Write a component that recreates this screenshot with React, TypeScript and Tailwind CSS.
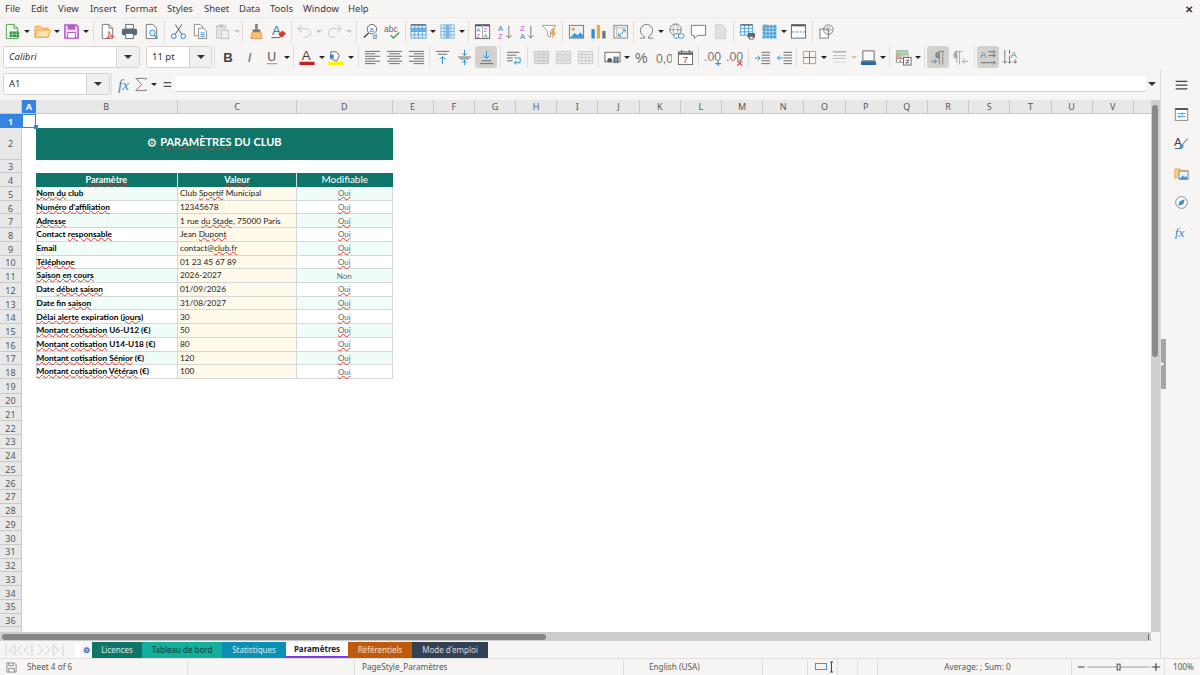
import React from 'react';

const UI = "font-['Noto_Sans',sans-serif]";
const CELL = "font-['Lato','Noto_Sans',sans-serif]";

// builds the path of a small table icon
function grid(x: number, y: number, w: number, h: number, cols: number, rows: number) {
  let d = `M${x} ${y}h${w}v${h}h${-w}z`;
  for (let i = 1; i < cols; i++) d += `M${x + (w * i) / cols} ${y}v${h}`;
  for (let i = 1; i < rows; i++) d += `M${x} ${y + (h * i) / rows}h${w}`;
  return d;
}

const lines = (ws: number[][], y0: number, step: number, c = '#666') => (
  <path d={ws.map(([x, w], i) => `M${x} ${y0 + i * step + 0.5}h${w}`).join('')} stroke={c} fill="none" />
);

const T = ({ x, y, s, c, w, i, children }: { x: number; y: number; s: number; c: string; w?: number; i?: boolean; children: React.ReactNode }) => (
  <text x={x} y={y} fontSize={s} fill={c} fontWeight={w} fontStyle={i ? 'italic' : undefined} fontFamily="Liberation Sans, sans-serif">{children}</text>
);

const icons: Record<string, React.ReactNode> = {
  new: <><path d="M2.5 1.5h8l4 4v11h-12z" fill="#eef8ee" stroke="#4aa350" /><path d="M10.5 1.5v4h4" fill="none" stroke="#4aa350" /><rect x="6" y="9" width="10" height="6" fill="#3b9448" /><path d="M9 9v6M13 9v6M6 12h10" stroke="#bfe3c2" strokeWidth=".6" /></>,
  open: <><path d="M1 15V3.5h6l1.5 2H15V15z" fill="#fbcf8a" stroke="#e9a23b" /><path d="M1 15l2.5-7.5H17.5L15 15z" fill="#fde2b2" stroke="#e9a23b" /></>,
  save: <><path d="M2 2h12l2 2v12H2z" fill="#f4dcf8" stroke="#b35ac6" strokeWidth="1.6" /><rect x="5" y="2" width="8" height="5" fill="#b35ac6" /><rect x="5" y="10" width="8" height="6" fill="#fff" stroke="#b35ac6" /></>,
  pdf: <><path d="M3.5 1.5h7l4 4v11h-11z" fill="#fff" stroke="#777" /><path d="M10.5 1.5v4h4" fill="none" stroke="#777" /><path d="M8 16.5c2.5-2 3-5 2.5-7.5 1 3.5 2.5 5 5.5 5.5-3-.5-6 .5-8 2z" fill="none" stroke="#d9383a" /></>,
  print: <><rect x="5" y="1.5" width="8" height="5" fill="#fff" stroke="#666" /><rect x="1" y="6" width="16" height="7" rx="1.5" fill="#5a6a76" /><rect x="5" y="11" width="8" height="5.5" fill="#fff" stroke="#666" /></>,
  preview: <><path d="M3.5 1.5h7l4 4v11h-11z" fill="#fff" stroke="#777" /><circle cx="10" cy="10.5" r="3" fill="#e3f1fb" stroke="#2f8fd0" /><path d="M12 13l3.5 3.5" stroke="#2f8fd0" strokeWidth="1.5" /></>,
  cut: <><circle cx="4" cy="14" r="2.5" fill="none" stroke="#2a80c4" /><circle cx="14" cy="14" r="2.5" fill="none" stroke="#2a80c4" /><path d="M5.5 12L12.5 1.5M12.5 12L5.5 1.5" stroke="#555" /></>,
  copy: <><path d="M2.5 1.5h6l3 3v9h-9z" fill="#fff" stroke="#888" /><path d="M7 5.5h5l3.5 3v8H7z" fill="#fff" stroke="#888" /><path d="M9 10.5h4.5M9 12.5h4.5M9 14.5h4.5" stroke="#2f8fd0" /></>,
  paste: <><rect x="2.5" y="3" width="10" height="13" fill="#e2e2e2" stroke="#c4c4c4" /><rect x="5" y="1.5" width="5" height="3" fill="#c4c4c4" /><rect x="8" y="8" width="7.5" height="8.5" fill="#f0f0f0" stroke="#c4c4c4" /></>,
  clone: <><rect x="7.5" y="1" width="3" height="6" fill="#888" /><rect x="5" y="7" width="8" height="2.5" fill="#666" /><path d="M4.5 9.5h9l1.5 7H3z" fill="#f7c081" stroke="#e09a45" /></>,
  clear: <><T x={2} y={13} s={14} c="#2f7fb5">A</T><path d="M9 12l4-4 4 3-4 4h-2z" fill="#d9383a" /><path d="M1.5 15.5h9" stroke="#555" /></>,
  undo: <path d="M6 2L2 6l4 4M2 6h9a4 4 0 0 1 0 9H8" fill="none" stroke="#d0d0d0" strokeWidth="1.2" />,
  redo: <path d="M12 2l4 4-4 4M16 6H7a4 4 0 0 0 0 9h3" fill="none" stroke="#d0d0d0" strokeWidth="1.2" />,
  find: <><circle cx="10.5" cy="6.5" r="5" fill="#fff" stroke="#666" /><path d="M7 10.5l-5 5" stroke="#555" strokeWidth="1.6" /><T x={8} y={9} s={8} c="#2a80c4">a</T><T x={11.5} y={17} s={8} c="#555">d</T></>,
  spell: <><T x={0} y={9} s={9} c="#666">abc</T><path d="M7 13l3 3 6-6" fill="none" stroke="#3fa34d" strokeWidth="1.5" /></>,
  rows: <><rect x="1" y="5.5" width="16" height="3.5" fill="#6db5e6" /><path d={grid(1, 2, 16, 14, 4, 4)} fill="none" stroke="#5ba3da" /><path d="M1 2h16" stroke="#555" strokeWidth="1.2" /></>,
  cols: <><rect x="7" y="2" width="4" height="14" fill="#6db5e6" /><path d={grid(2, 2, 14, 14, 4, 4)} fill="none" stroke="#7db4de" /></>,
  sort: <><rect x="1.5" y="2" width="15" height="14.5" fill="#fff" stroke="#666" /><path d="M1.5 2.5h15" stroke="#555" strokeWidth="2" /><path d="M9 2v14" stroke="#aaa" /><T x={2.5} y={9.5} s={6.5} c="#2a80c4">A</T><T x={2.5} y={15.5} s={6.5} c="#c45ac8">Z</T><T x={10} y={9.5} s={6.5} c="#c45ac8">Z</T><T x={10} y={15.5} s={6.5} c="#2a80c4">A</T></>,
  asc: <><T x={1} y={8} s={8} c="#2a80c4">A</T><T x={1} y={16.5} s={8} c="#c45ac8">Z</T><path d="M12.5 3v13M9.5 13l3 3 3-3" fill="none" stroke="#777" /></>,
  desc: <><T x={1} y={8} s={8} c="#c45ac8">Z</T><T x={1} y={16.5} s={8} c="#2a80c4">A</T><path d="M12.5 3v13M9.5 13l3 3 3-3" fill="none" stroke="#777" /></>,
  filter: <><path d="M1.5 2.5h14L10 9v6l-3-1.5V9z" fill="#fff" stroke="#999" /><path d="M13 6l-3 6h2.5l-1 5 4.5-7h-2.5l1.5-4z" fill="#f0a030" /></>,
  image: <><rect x="1.5" y="2.5" width="15" height="13.5" fill="#e6f2fb" stroke="#777" /><circle cx="5.5" cy="6.5" r="1.7" fill="#f0a030" /><path d="M2 15.5l5-5 3 2.5 3-3 3.5 3.5v2z" fill="#3f97d6" /></>,
  chart: <><rect x="1.5" y="6.5" width="3.5" height="10" fill="#2f8fd0" /><rect x="7.2" y="2" width="3.5" height="14.5" fill="#f0a64a" /><rect x="13" y="8.5" width="3.5" height="8" fill="#6b7780" /></>,
  pivot: <><rect x="2" y="2.5" width="14.5" height="13.5" fill="#f3f3f3" stroke="#888" /><path d="M2 5h14.5M5 2.5V16" stroke="#bbb" /><path d="M7.5 13.5l6-6M11 7h3v3M7 11v3h3" fill="none" stroke="#2f8fd0" /></>,
  omega: <path d="M2 16h5v-1.5C4 13 2.5 10.5 2.5 8a6.5 6.5 0 0 1 13 0c0 2.5-1.5 5-4.5 6.5V16h5" fill="none" stroke="#777" strokeWidth="1" />,
  link: <><circle cx="8" cy="7" r="6" fill="#fff" stroke="#777" /><path d="M2 7h12M8 1c-3.5 3.5-3.5 8.5 0 12M8 1c3.5 3.5 3.5 8.5 0 12" fill="none" stroke="#777" strokeWidth=".7" /><rect x="6" y="11.5" width="6" height="4.5" rx="2.2" fill="#fff" stroke="#2f8fd0" /><rect x="11" y="11.5" width="6" height="4.5" rx="2.2" fill="#fff" stroke="#2f8fd0" /></>,
  comment: <path d="M1.5 2.5h15v10.5H8l-3.5 3.5V13h-3z" fill="#fff" stroke="#777" />,
  header: <path d="M3.5 1.5h7l4 4v11h-11z" fill="#e0e0e0" stroke="#d2d2d2" />,
  freeze: <><path d={grid(1.5, 2, 13, 11, 3, 3)} fill="#eaf4fb" stroke="#5ba3da" /><path d="M1.5 2h13" stroke="#555" strokeWidth="1.2" /><rect x="9" y="10.5" width="8" height="5" rx="1" fill="#666" /><rect x="11" y="14" width="4" height="3" fill="#fff" stroke="#666" /></>,
  split: <><rect x="1.5" y="2" width="15" height="14.5" fill="#4a9fd8" /><path d={grid(1.5, 2, 15, 14.5, 4, 4)} fill="none" stroke="#cfe6f6" strokeWidth=".7" /><path d="M5 1v5.5H1" fill="none" stroke="#e8753a" strokeWidth="1.2" strokeDasharray="1.5 1" /></>,
  pagebreak: <><rect x="1.5" y="2" width="15" height="14" fill="#fff" stroke="#666" /><path d="M1.5 2.5h15" stroke="#555" strokeWidth="2" /><path d="M2 9.5h14" stroke="#2f8fd0" strokeDasharray="2.5 1.5" /></>,
  shapes: <><rect x="2" y="6.5" width="9" height="9.5" fill="#fff" stroke="#777" /><circle cx="11" cy="7" r="5" fill="none" stroke="#777" /><path d="M11 9l3-2-3-3-3 3z" fill="none" stroke="#999" /></>,

  bold: <T x={3.5} y={14} s={14} c="#444" w={700}>B</T>,
  italic: <T x={6} y={14} s={14} c="#666" i>I</T>,
  under: <><T x={3.5} y={12.5} s={13} c="#555">U</T><path d="M3 15.5h11" stroke="#7ab0da" strokeWidth="1.4" /></>,
  fcolor: <><T x={3} y={12} s={14} c="#444">A</T><rect x="0.5" y="13.5" width="16" height="3.5" fill="#c5221f" /></>,
  bgcolor: <><path d="M3 3h6l3 4-3 6-6-3z" fill="#fff" stroke="#666" /><rect x="2" y="6" width="4" height="4" fill="#3b7fc4" /><rect x="0.5" y="13.5" width="16" height="3.5" fill="#fff200" /></>,
  left: lines([[1, 16], [1, 11], [1, 16], [1, 11], [1, 16], [1, 11]], 2, 2.6),
  center: lines([[1, 16], [3.5, 11], [1, 16], [3.5, 11], [1, 16], [3.5, 11]], 2, 2.6),
  right: lines([[1, 16], [6, 11], [1, 16], [6, 11], [1, 16], [6, 11]], 2, 2.6),
  top: <><path d="M2 2.5h14M4 5.5h10" stroke="#666" fill="none" /><path d="M9 16V8M6 11l3-3 3 3" fill="none" stroke="#2f8fd0" /></>,
  middle: <><path d="M2 8.5h14M4 10.5h10" stroke="#666" fill="none" /><path d="M9 1v6M6.5 4.5L9 7l2.5-2.5M9 17v-5M6.5 14.5L9 12l2.5 2.5" fill="none" stroke="#2f8fd0" /></>,
  bottom: <><path d="M2 15.5h14M4 12.5h10" stroke="#666" fill="none" /><path d="M9 2v8M6 7l3 3 3-3" fill="none" stroke="#2f8fd0" /></>,
  wrap: <><path d="M1 3.5h13M1 6.5h10M1 9.5h6M1 12.5h6" stroke="#666" fill="none" /><path d="M9 9.5h6v5H9M11 12.5l-2 2 2 2" fill="none" stroke="#2f8fd0" /></>,
  merge1: <path d={grid(1.5, 2.5, 15, 13, 3, 4)} fill="#e0e0e0" stroke="#c8c8c8" />,
  merge2: <><path d={grid(1.5, 2.5, 15, 13, 3, 4)} fill="#e8e8e8" stroke="#cccccc" /><rect x="2" y="6" width="14" height="6" fill="#dcdcdc" /></>,
  merge3: <path d={grid(1.5, 2.5, 15, 13, 4, 4)} fill="#eeeeee" stroke="#cccccc" />,
  number: <><rect x="1" y="3.5" width="16" height="10" fill="#fff" stroke="#666" /><circle cx="6" cy="12" r="2.4" fill="#555" /><rect x="10" y="8" width="2.5" height="7" fill="#6b7780" /><rect x="13" y="8" width="2.5" height="7" fill="#6b7780" /></>,
  percent: <T x={2} y={15} s={15} c="#666">%</T>,
  zero: <T x={1} y={14.5} s={13} c="#777">0,0</T>,
  date: <><rect x="1.5" y="3" width="15" height="13.5" fill="#fff" stroke="#666" /><path d="M1.5 5h15" stroke="#555" strokeWidth="2" /><path d="M5 1v3M13 1v3" stroke="#555" /><T x={6} y={15} s={10} c="#555">7</T></>,
  addDec: <><T x={0} y={13} s={13} c="#777">.00</T><path d="M12 15.5h6M15 12.5v6" stroke="#2f8fd0" strokeWidth="1.2" /></>,
  delDec: <><T x={0} y={13} s={13} c="#777">.00</T><path d="M12 12.5l5 5M17 12.5l-5 5" stroke="#d9383a" strokeWidth="1.2" /></>,
  indent: <><path d="M8 3.5h9M8 6.5h9M8 9.5h9M8 12.5h9M8 15.5h9" stroke="#666" fill="none" /><path d="M1 9.5h5M4 7l2.5 2.5L4 12" fill="none" stroke="#2f8fd0" /></>,
  outdent: <><path d="M8 3.5h9M8 6.5h9M8 9.5h9M8 12.5h9M8 15.5h9" stroke="#666" fill="none" /><path d="M7 9.5H1.5M4 7L1.5 9.5 4 12" fill="none" stroke="#2f8fd0" /></>,
  borders: <><path d="M2.5 2.5h13v13h-13z" fill="none" stroke="#d9925a" /><path d="M9 2.5v13M2.5 9h13" stroke="#777" /></>,
  linestyle: <><path d="M2 3h14" stroke="#bbb" strokeWidth="2" /><path d="M2 7h14M2 10h14" stroke="#bbb" /><path d="M2 14h14" stroke="#ccc" strokeDasharray="2 1" /></>,
  bcolor: <><rect x="3" y="2" width="12" height="10.5" fill="#f8f8f8" stroke="#666" /><rect x="1" y="13" width="16" height="4" rx=".5" fill="#2468a8" /></>,
  cond: <><path d={grid(1.5, 2, 12, 12, 3, 3)} fill="#fff" stroke="#888" /><rect x="1.5" y="2" width="12" height="4" fill="#a5dba8" /><rect x="1.5" y="6" width="6" height="4" fill="#f0a098" /><rect x="9" y="9" width="8" height="8" fill="#fff" stroke="#666" /><path d="M11 12h4M11 14.5h4M14.5 11l-2.5 5" stroke="#555" strokeWidth=".8" fill="none" /></>,
  ltr: <><path d="M9 2.5h6M10 2.5v14M13.5 2.5v14" stroke="#888" fill="none" /><path d="M9 3a3 3 0 0 0 0 7h1z" fill="#888" /><path d="M1 13h6M4.5 10.5L7 13l-2.5 2.5" fill="none" stroke="#2f8fd0" /></>,
  rtl: <><path d="M3 2.5h8M8 2.5v14M5 2.5v12" stroke="#aaa" fill="none" /><path d="M9 3a3 3 0 0 1 0 7H8z" transform="matrix(-1 0 0 1 14 0)" fill="#aaa" /><path d="M17 13h-6M13.5 10.5L11 13l2.5 2.5" fill="none" stroke="#6db3e0" /></>,
  horiz: <><T x={0} y={9} s={10} c="#2f8fd0">A</T><path d="M9 3h7M14 1l2 2-2 2M9 7h7M14 5l2 2-2 2M1 14.5h15M14 12.5l2 2-2 2" fill="none" stroke="#666" strokeWidth=".9" /></>,
  vert: <><T x={9} y={10} s={10} c="#2f8fd0">A</T><path d="M3 1v14M1 13l2 2 2-2M8 7v8M6 13l2 2 2-2M14 11v4M12 13l2 2 2-2" fill="none" stroke="#666" strokeWidth=".9" /><path d="M8 1v4" stroke="#666" /></>,

  menuLines: <path d="M2 4h14M2 8.5h14M2 13h14" stroke="#444" strokeWidth="1.6" />,
  props: <><rect x="1.5" y="2" width="15" height="14" fill="#fff" stroke="#777" /><path d="M1.5 2.5h15" stroke="#444" strokeWidth="2" /><path d="M4 8h10M4 11.5h10" stroke="#2f8fd0" /><path d="M10 6.5v3M7 10v3" stroke="#2f8fd0" /></>,
  styles: <><T x={0} y={12} s={14} c="#444">A</T><path d="M1 15h7" stroke="#444" /><path d="M16.5 3l-7 8" stroke="#999" strokeWidth="1.5" /><path d="M10 9.5c-3 1-3 4-4.5 6 3 1 6 0 6-4.5z" fill="#3f97d6" /></>,
  gallery: <><path d="M1 15V3.5h6l1.5 2H16" fill="#fbcf8a" stroke="#e9a23b" /><path d="M1 14h7" stroke="#e9a23b" /><rect x="6" y="6" width="11" height="10" fill="#e6f2fb" stroke="#777" /><path d="M6.5 15.5l4-4 2 2 1.5-1.5 2.5 2.5v1z" fill="#3f97d6" /></>,
  nav: <><circle cx="9" cy="9" r="7" fill="#fff" stroke="#777" /><path d="M13 5l-6 2.5L5 13l6-2z" fill="#2f8fd0" /></>,
  fx: <text x="1" y="15" fontSize="16" fontStyle="italic" fill="#2f8fd0" fontFamily="Liberation Serif, serif">fx</text>,
  sum: <path d="M14 4V2.5H3L9 9l-6 6.5h11V14" fill="none" stroke="#777" />,
  equal: <path d="M5 7h8M5 11h8" stroke="#555" strokeWidth="1.4" />,
};

function Tool({ name, active, small }: { name: string; active?: boolean; small?: boolean }) {
  return (
    <div className={`w-[22px] h-[22px] shrink-0 flex items-center justify-center rounded-[3px] ${active ? 'bg-[#d3d1ce]' : ''}`}>
      <svg viewBox="0 0 18 18" className={small ? 'w-[15px] h-[15px]' : 'w-[17px] h-[17px]'}>{icons[name]}</svg>
    </div>
  );
}

function Arrow({ w, grey }: { w: string; grey?: boolean }) {
  return (
    <div className={`${w} shrink-0 flex justify-center`}>
      <div className={`w-0 h-0 border-x-[3px] border-x-transparent border-t-[3px] ${grey ? 'border-t-[#c4c4c4]' : 'border-t-[#222]'}`} />
    </div>
  );
}

function Sep({ w }: { w: string }) {
  return (
    <div className={`${w} shrink-0 flex justify-center`}>
      <div className="w-px h-[22px] bg-[#e2e0dd]" />
    </div>
  );
}

// a: arrow, s: separator, g: blank gap, +name: pressed button
function Bar({ items }: { items: string[] }) {
  const widths: Record<string, string> = { '1': 'w-px', '3': 'w-[3px]', '4': 'w-[4px]', '5': 'w-[5px]', '6': 'w-[6px]', '7': 'w-[7px]', '8': 'w-[8px]' };
  return (
    <>
      {items.map((t, i) => {
        const n = t.slice(1);
        if (/^a\d$/.test(t)) return <Arrow key={i} w={widths[n]} />;
        if (/^d\d$/.test(t)) return <Arrow key={i} w={widths[n]} grey />;
        if (/^s\d$/.test(t)) return <Sep key={i} w={widths[n]} />;
        if (t === 'g1') return <div key={i} className="w-px shrink-0" />;
        if (t[0] === '+') return <Tool key={i} name={n} active />;
        return <Tool key={i} name={t} />;
      })}
    </>
  );
}

const row1 = ['new', 'a8', 'open', 'a7', 'save', 'a8', 's6', 'pdf', 'print', 'preview', 's5', 'cut', 'copy', 'paste', 'd7', 's5', 'clone', 'clear', 's4', 'undo', 'd8', 'redo', 'd8', 's6', 'find', 'spell', 's4', 'rows', 'a7', 'cols', 'a8', 's5', 'sort', 'g1', 'asc', 'desc', 'filter', 's5', 'image', 'chart', 'pivot', 's4', 'omega', 'a7', 'g1', 'link', 'comment', 'header', 's5', 'freeze', 'split', 'a7', 'pagebreak', 's6', 'shapes'];
const row2 = ['s5', 'bold', 'italic', 'under', 'a8', 's5', 'fcolor', 'a7', 'bgcolor', 'a8', 's6', 'left', 'center', 'right', 's4', 'top', 'middle', '+bottom', 's6', 'wrap', 's5', 'merge1', 'merge2', 'merge3', 's5', 'number', 'a7', 'percent', 'zero', 'date', 's5', 'addDec', 'delDec', 's6', 'indent', 'outdent', 's3', 'borders', 'a8', 'linestyle', 'd7', 'bcolor', 'a8', 's5', 'cond', 'a8', 's5', '+ltr', 'rtl', 's6', '+horiz', 'vert'];

function Combo({ text, inputW, btnW, italic }: { text: string; inputW: string; btnW: string; italic?: boolean }) {
  return (
    <div className={`h-[22px] flex shrink-0 rounded-[3px] border border-[#d6d4d1] overflow-hidden ${UI} text-[9.5px] text-[#333]`}>
      <div className={`${inputW} bg-white flex items-center pl-[5px] ${italic ? 'italic' : ''}`}>{text}</div>
      <div className={`${btnW} bg-[#f1f0ee] border-l border-[#d6d4d1] flex items-center justify-center`}>
        <div className="w-0 h-0 border-x-[4px] border-x-transparent border-t-[4px] border-t-[#333]" />
      </div>
    </div>
  );
}

const W = ({ children }: { children: React.ReactNode }) => (
  <span className="underline decoration-wavy decoration-[#e5352b] decoration-[0.6px] underline-offset-[0px]">{children}</span>
);

const params: [React.ReactNode, React.ReactNode, boolean][] = [
  [<><W>Nom du</W> club</>, <>Club <W>Sportif</W> Municipal</>, true],
  [<W>Numéro d'affiliation</W>, '12345678', true],
  [<W>Adresse</W>, <>1 rue <W>du Stade,</W> 75000 Paris</>, true],
  [<>Contact <W>responsable</W></>, <>Jean <W>Dupont</W></>, true],
  ['Email', <>contact@<W>club.fr</W></>, true],
  [<W>Téléphone</W>, '01 23 45 67 89', true],
  [<W>Saison en cours</W>, '2026-2027', false],
  [<>Date <W>début saison</W></>, '01/09/2026', true],
  [<>Date fin <W>saison</W></>, '31/08/2027', true],
  [<><W>Délai alerte</W> expiration <W>(jours)</W></>, '30', true],
  [<><W>Montant cotisation</W> U6-U12 (€)</>, '50', true],
  [<><W>Montant cotisation</W> U14-U18 (€)</>, '80', true],
  [<><W>Montant cotisation Sénior</W> (€)</>, '120', true],
  [<><W>Montant cotisation Vétéran</W> (€)</>, '100', true],
];

const colLetters = ['E', 'F', 'G', 'H', 'I', 'J', 'K', 'L', 'M', 'N', 'O', 'P', 'Q', 'R', 'S', 'T', 'U', 'V'];

function RowHead({ n, h, on }: { n?: number; h: string; on?: boolean }) {
  return (
    <div className={`w-[22px] ${h} shrink-0 flex items-center justify-center pt-[2px] border-r border-b ${UI} text-[9px] ${on ? 'bg-[#3584e4] border-[#3584e4] text-white font-bold' : 'bg-[#e8e8e8] border-[#c9c9c9] text-[#555]'}`}>{n}</div>
  );
}

function Sheet() {
  const empty = Array.from({ length: 17 }, (_, i) => i + 20);
  return (
    <div className="w-[1152px] h-[532px] overflow-hidden bg-white">
      {/* column headers */}
      <div className={`flex h-[14px] ${UI} text-[9px] text-[#555] bg-[#e8e8e8] border-b border-[#c9c9c9]`}>
        <div className="w-[22px] shrink-0 border-r border-[#c9c9c9]" />
        <div className="w-[13.5px] shrink-0 bg-[#3584e4] text-white font-bold flex items-center justify-center">A</div>
        <div className="w-[142.5px] shrink-0 border-r border-[#c9c9c9] flex items-center justify-center">B</div>
        <div className="w-[119px] shrink-0 border-r border-[#c9c9c9] flex items-center justify-center">C</div>
        <div className="w-[95.5px] shrink-0 border-r border-[#c9c9c9] flex items-center justify-center">D</div>
        {colLetters.map((c) => (
          <div key={c} className="w-[41.2px] shrink-0 border-r border-[#c9c9c9] flex items-center justify-center">{c}</div>
        ))}
      </div>

      <div className="flex h-[13.5px] relative">
        <RowHead n={1} h="h-[13.5px]" on />
        <div className="w-[14px] h-[13.5px] border border-[#3584e4]" />
        <div className="absolute left-[34px] top-[11px] w-[4px] h-[4px] bg-[#3584e4] z-10" />
      </div>

      <div className="flex h-[32px]">
        <RowHead n={2} h="h-[32px]" />
        <div className="w-[13.5px] shrink-0" />
        <div className={`w-[357px] pb-[2px] bg-[#0f7568] flex items-center justify-center text-white font-bold text-[11px] ${CELL}`}>
          <span className="font-['DejaVu_Sans'] font-normal text-[12px] mr-[3px]">⚙</span>
          <span><W>PARAMÈTRES</W> DU CLUB</span>
        </div>
      </div>

      <div className="flex h-[13.72px]"><RowHead n={3} h="h-[13.72px]" /></div>

      <div className={`flex h-[13.72px] ${CELL} text-white`}>
        <RowHead n={4} h="h-[13.72px]" />
        <div className="w-[13.5px] shrink-0" />
        <div className="w-[142.5px] shrink-0 bg-[#0f7568] border-r border-[#cfe3df] flex items-center justify-center text-[9px] font-bold"><W>Paramètre</W></div>
        <div className="w-[119px] shrink-0 bg-[#0f7568] border-r border-[#cfe3df] flex items-center justify-center text-[9px] font-bold"><W>Valeur</W></div>
        <div className="w-[95.5px] shrink-0 bg-[#0f7568] flex items-center justify-center text-[10px] pb-[2px]">Modifiable</div>
      </div>

      {params.map(([label, value, editable], i) => (
        <div key={i} className={`flex h-[13.72px] ${CELL} text-[8.3px] leading-none text-[#222]`}>
          <RowHead n={i + 5} h="h-[13.72px]" />
          <div className="w-[13.5px] shrink-0" />
          <div className={`w-[142.5px] shrink-0 border-r border-b border-l border-[#d5d8d8] flex items-center font-bold whitespace-nowrap text-black ${i % 2 === 0 ? 'bg-[#effcf8]' : 'bg-white'}`}><span>{label}</span></div>
          <div className="w-[119px] shrink-0 border-r border-b border-[#d5d8d8] pl-[2px] flex items-center whitespace-nowrap bg-[#fff9ea]"><span>{value}</span></div>
          <div className={`w-[95.5px] shrink-0 border-r border-b border-[#d5d8d8] flex items-center justify-center text-[#666] text-[8px] ${i % 2 === 0 ? 'bg-[#effcf8]' : 'bg-white'}`}>
            {editable ? <W>Oui</W> : 'Non'}
          </div>
        </div>
      ))}

      <div className="flex h-[14.5px]"><RowHead n={19} h="h-[14.5px]" /></div>
      {empty.map((n) => (
        <div key={n} className="flex h-[13.76px]"><RowHead n={n} h="h-[13.76px]" /></div>
      ))}
      <div className="flex h-[6px]"><RowHead h="h-[6px]" /></div>
    </div>
  );
}

const tabs = [
  { name: 'Licences', cls: 'w-[50px] bg-[#0f7568] text-[#d8efeb]' },
  { name: 'Tableau de bord', cls: 'w-[80px] bg-[#14ae9c] text-[#0b3d38]' },
  { name: 'Statistiques', cls: 'w-[64px] bg-[#0b8fb3] text-[#d6eef5]' },
  { name: 'Paramètres', cls: 'w-[62px] bg-white text-[#222] font-bold border-b-2 border-[#7c3aed]' },
  { name: 'Référentiels', cls: 'w-[64px] bg-[#bf5a0c] text-[#f7e0cc]' },
  { name: "Mode d'emploi", cls: 'w-[76px] bg-[#334155] text-[#d5dae1]' },
];

function StatusCell({ w, children, cls }: { w: string; children?: React.ReactNode; cls?: string }) {
  return <div className={`${w} shrink-0 h-full flex items-center border-r border-[#e2e0dd] ${cls ?? ''}`}>{children}</div>;
}

export default function App() {
  const menu = [
    ['File', 'w-[26px]'], ['Edit', 'w-[27px]'], ['View', 'w-[32px]'], ['Insert', 'w-[35px]'], ['Format', 'w-[42px]'],
    ['Styles', 'w-[37px]'], ['Sheet', 'w-[35px]'], ['Data', 'w-[31px]'], ['Tools', 'w-[33px]'], ['Window', 'w-[45px]'], ['Help', 'w-[30px]'],
  ];
  return (
    <div className={`w-[1200px] h-[675px] overflow-hidden flex flex-col bg-[#f6f5f3] ${UI} text-[#3a3a3a]`}>
      {/* menu bar */}
      <div className="h-[17px] shrink-0 flex items-center pl-[5px] pr-[7px] pt-px text-[9.5px]">
        {menu.map(([m, w]) => <div key={m} className={w}>{m}</div>)}
        <div className="ml-auto text-[10px] font-bold text-[#333]">✕</div>
      </div>

      {/* standard toolbar */}
      <div className="h-[27px] shrink-0 flex items-center pl-px pt-px border-t border-[#eceae7] mr-[16px]">
        <Bar items={row1} />
      </div>

      {/* formatting toolbar */}
      <div className="h-[26px] shrink-0 flex items-center pl-[3px]">
        <Combo text="Calibri" inputW="w-[112px]" btnW="w-[23px]" italic />
        <div className="w-[6px] shrink-0" />
        <Combo text="11 pt" inputW="w-[42px]" btnW="w-[22px]" />
        <Bar items={row2} />
      </div>

      <div className="flex-1 min-h-0 flex relative">
        <div className="w-[1161px] shrink-0 flex flex-col border-r border-[#dcdad7]">
          {/* formula bar */}
          <div className="h-[30px] shrink-0 flex items-center pl-[3px] pb-[2px]">
            <Combo text="A1" inputW="w-[82px]" btnW="w-[23px]" />
            <Sep w="w-[3px]" />
            <div className="ml-px"><Tool name="fx" /></div>
            <div className="-ml-[6px]"><Tool name="sum" /></div>
            <div className="-ml-[2px]"><Arrow w="w-[7px]" /></div>
            <div className="-ml-[1px]"><Tool name="equal" /></div>
            <div className="w-[971px] h-[16px] -ml-[3px] bg-white border-b border-[#d6d4d1]" />
            <div className="w-[12px] flex justify-center">
              <div className="w-0 h-0 border-x-[4px] border-x-transparent border-t-[4px] border-t-[#333]" />
            </div>
          </div>

          {/* sheet with vertical scrollbar */}
          <div className="h-[532px] shrink-0 flex">
            <Sheet />
            <div className="w-[9px] bg-[#cfcfcf] pt-[5px] pl-[1px]">
              <div className="w-[6px] h-[252px] rounded-full bg-[#8a8a8a]" />
            </div>
          </div>

          {/* horizontal scrollbar */}
          <div className="h-[9px] shrink-0 bg-[#cdcdcd] mr-[9px] flex items-center pl-[2px] pr-[2px]">
            <div className="w-[544px] h-[6px] rounded-full bg-[#868686]" />
            <div className="ml-auto w-px h-[6px] bg-[#666]" />
          </div>

          {/* tabs */}
          <div className="flex-1 min-h-0 flex pt-px">
            <div className="w-[75px] shrink-0 flex items-center pl-[5px]">
              <svg viewBox="0 0 62 14" className="w-[62px] h-[14px]" fill="none" stroke="#d4d4d4">
                <path d="M1 1v12M10 2L4 7l6 5zM17 2l-5 5 5 5M24 2l-5 5 5 5M27 1v12M33 2l5 5-5 5M40 2l5 5-5 5M48 2l6 5-6 5zM58 1v12" />
              </svg>
            </div>
            <div className="w-[17px] shrink-0 flex items-center gap-[1px]">
              <div className="w-[7px] h-[15px] bg-white" />
              <div className="text-[8px] font-bold text-[#2f6fb5] leading-none">⚙</div>
            </div>
            {tabs.map((t) => (
              <div key={t.name} className={`${t.cls} h-[16px] shrink-0 flex items-center justify-center text-[8px] whitespace-nowrap`}>{t.name}</div>
            ))}
          </div>
        </div>

        {/* grip on the sidebar edge */}
        <div className="absolute left-[1161px] top-[269px] w-[5px] h-[50px] bg-[#a6a6a6] flex items-center">
          <div className="w-0 h-0 border-y-[2.5px] border-y-transparent border-l-[3px] border-l-white" />
        </div>

        {/* sidebar */}
        <div className="flex-1 flex flex-col items-center pt-[4px] pl-[2px] gap-[7.4px]">
          <Tool name="menuLines" small />
          <Tool name="props" small />
          <Tool name="styles" small />
          <Tool name="gallery" small />
          <Tool name="nav" small />
          <Tool name="fx" small />
        </div>
      </div>

      {/* status bar */}
      <div className="h-[17px] shrink-0 flex items-center border-t border-[#e2e0dd] text-[8.2px] text-[#555]">
        <StatusCell w="w-[188px]" cls="pl-[6px] gap-[10px]">
          <svg viewBox="0 0 12 12" className="w-[11px] h-[11px]" fill="none" stroke="#888">
            <path d="M1 1h8l2 2v8H1zM3 1v3h5V1M3 11V7h6v4" />
          </svg>
          Sheet 4 of 6
        </StatusCell>
        <StatusCell w="w-[167px]" />
        <StatusCell w="w-[269px]" cls="pl-[7px]">PageStyle_Paramètres</StatusCell>
        <StatusCell w="w-[139px]" cls="pl-[25px]">English (USA)</StatusCell>
        <StatusCell w="w-[45px]" />
        <StatusCell w="w-[30px]" cls="pl-[7px]">
          <svg viewBox="0 0 22 12" className="w-[22px] h-[12px]" fill="none">
            <rect x="0.5" y="2.5" width="11" height="6" stroke="#3f97d6" />
            <path d="M15 1h3M15 11h3M16.5 1v10" stroke="#444" />
          </svg>
        </StatusCell>
        <StatusCell w="w-[20px]" />
        <StatusCell w="w-[20px]" />
        <StatusCell w="w-[194px]" cls="justify-center pl-[6px]">Average: ; Sum: 0</StatusCell>
        <StatusCell w="w-[93px]" cls="pl-[5px]">
          <svg viewBox="0 0 92 12" className="w-[88px] h-[12px] shrink-0" fill="none" stroke="#444" preserveAspectRatio="xMinYMid meet">
            <path d="M1 6h7M78 6h9M82.5 2v8" strokeWidth="1.3" />
            <path d="M11 6h65" stroke="#999" />
            <rect x="42" y="3" width="3" height="6" fill="#f6f5f3" />
          </svg>
        </StatusCell>
        <div className="pl-[8px]">100%</div>
      </div>
    </div>
  );
}
